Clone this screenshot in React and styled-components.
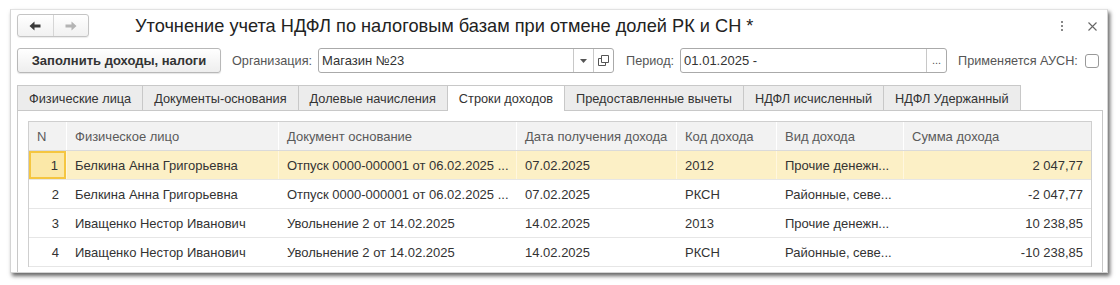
import React from 'react';
import styled, {createGlobalStyle, css} from 'styled-components';

const COLS = '38px 212px 238px 160px 100px 127px 1fr';

const tabs = [
  'Физические лица',
  'Документы-основания',
  'Долевые начисления',
  'Строки доходов',
  'Предоставленные вычеты',
  'НДФЛ исчисленный',
  'НДФЛ Удержанный',
];

const headers = [
  'N',
  'Физическое лицо',
  'Документ основание',
  'Дата получения дохода',
  'Код дохода',
  'Вид дохода',
  'Сумма дохода',
];

const rows = [
  ['1', 'Белкина Анна Григорьевна', 'Отпуск 0000-000001 от 06.02.2025 ...', '07.02.2025', '2012', 'Прочие денежн...', '2 047,77'],
  ['2', 'Белкина Анна Григорьевна', 'Отпуск 0000-000001 от 06.02.2025 ...', '07.02.2025', 'РКСН', 'Районные, севе...', '-2 047,77'],
  ['3', 'Иващенко Нестор Иванович', 'Увольнение 2 от 14.02.2025', '14.02.2025', '2013', 'Прочие денежн...', '10 238,85'],
  ['4', 'Иващенко Нестор Иванович', 'Увольнение 2 от 14.02.2025', '14.02.2025', 'РКСН', 'Районные, севе...', '-10 238,85'],
];

const App = () => {
  return (
    <Page>
      <GlobalStyle />
      <Window>
        <Header>
          <NavGroup>
            <NavButton>
              <svg width="12" height="10" viewBox="0 0 12 10">
                <path d="M0.5 5 L5.5 0.5 L5.5 3.6 L11.5 3.6 L11.5 6.4 L5.5 6.4 L5.5 9.5 Z" fill="#3a3a3a" />
              </svg>
            </NavButton>
            <NavButton $divider>
              <svg width="12" height="10" viewBox="0 0 12 10">
                <path d="M11.5 5 L6.5 0.5 L6.5 3.6 L0.5 3.6 L0.5 6.4 L6.5 6.4 L6.5 9.5 Z" fill="#b4b4b4" />
              </svg>
            </NavButton>
          </NavGroup>
          <Title>Уточнение учета НДФЛ по налоговым базам при отмене долей РК и СН *</Title>
          <WindowTools>
            <MoreIcon>
              <i />
              <i />
              <i />
            </MoreIcon>
            <svg width="9" height="9" viewBox="0 0 9 9">
              <path d="M0.5 0.5 L8.5 8.5 M8.5 0.5 L0.5 8.5" stroke="#666" strokeWidth="1.1" />
            </svg>
          </WindowTools>
        </Header>

        <Toolbar>
          <FillButton>Заполнить доходы, налоги</FillButton>
          <Label $gap={11}>Организация:</Label>
          <Field $width={296}>
            <FieldText>Магазин №23</FieldText>
            <FieldButton>
              <svg width="7" height="4" viewBox="0 0 7 4">
                <path d="M0 0 L7 0 L3.5 4 Z" fill="#555" />
              </svg>
            </FieldButton>
            <FieldButton>
              <svg width="11" height="11" viewBox="0 0 11 11">
                <path d="M3.5 0.5 H10.5 V7.5 H3.5 Z" fill="none" stroke="#555" />
                <path d="M0.5 3.5 H3.5 M0.5 3.5 V10.5 H7.5 V7.5" fill="none" stroke="#555" />
              </svg>
            </FieldButton>
          </Field>
          <Label $gap={12}>Период:</Label>
          <Field $width={267}>
            <FieldText>01.01.2025 -</FieldText>
            <FieldButton>
              <Dots>...</Dots>
            </FieldButton>
          </Field>
          <Label $gap={11}>Применяется АУСН:</Label>
          <Checkbox />
        </Toolbar>

        <TabBar>
          {tabs.map((t, i) => (
            <Tab key={t} $active={i === 3}>
              {t}
            </Tab>
          ))}
        </TabBar>

        <Panel>
          <Table>
            <HeadRow>
              {headers.map((h) => (
                <HeadCell key={h}>{h}</HeadCell>
              ))}
            </HeadRow>
            {rows.map((r, i) => (
              <Row key={r[0]} $selected={i === 0}>
                {r.map((c, j) => (
                  <Cell
                    key={j}
                    $right={j === 0 || j === 6}
                    $current={i === 0 && j === 0}
                    $selected={i === 0}>
                    {c}
                  </Cell>
                ))}
              </Row>
            ))}
          </Table>
        </Panel>
      </Window>
    </Page>
  );
};

const GlobalStyle = createGlobalStyle`
  html, body {
    margin: 0;
    background: #ffffff;
  }
  body {
    font-family: "Liberation Sans", Arial, sans-serif;
    color: #333;
  }
  * {
    box-sizing: border-box;
  }
`;

const Page = styled.div`
  width: 1120px;
  height: 285px;
  padding: 9px 0 0 10px;
  overflow: hidden;
`;

const Window = styled.div`
  width: 1098px;
  height: 264px;
  border: 1px solid #d4d4d4;
  border-top-color: #e2e2e2;
  background: #fff;
  box-shadow: 2px 3px 4px rgba(0, 0, 0, 0.6);
  display: flex;
  flex-direction: column;
  padding: 4px 0 0 6px;
  overflow: hidden;
`;

const Header = styled.div`
  display: flex;
  align-items: center;
  height: 23px;
`;

const NavGroup = styled.div`
  display: flex;
  width: 72px;
  height: 23px;
  border: 1px solid #c4c4c4;
  border-radius: 3px;
  background: linear-gradient(#ffffff, #f1f1f1);
  box-shadow: 0 1px 1px rgba(0, 0, 0, 0.08);
`;

const NavButton = styled.div`
  flex: 1;
  display: flex;
  align-items: center;
  justify-content: center;
  ${(p) =>
    p.$divider &&
    css`
      border-left: 1px solid #d6d6d6;
    `}
`;

const Title = styled.div`
  margin-left: 46px;
  font-size: 18.2px;
  color: #222;
  white-space: nowrap;
  padding-top: 1px;
`;

const WindowTools = styled.div`
  margin-left: auto;
  margin-right: 10px;
  display: flex;
  align-items: center;
  gap: 25px;
  padding-top: 1px;
`;

const MoreIcon = styled.div`
  display: flex;
  flex-direction: column;
  gap: 2px;

  i {
    display: block;
    width: 2px;
    height: 2px;
    background: #888;
  }
`;

const Toolbar = styled.div`
  display: flex;
  align-items: center;
  margin-top: 11px;
  height: 25px;
`;

const FillButton = styled.div`
  width: 204px;
  height: 25px;
  display: flex;
  align-items: center;
  justify-content: center;
  border: 1px solid #b8b8b8;
  border-radius: 3px;
  background: linear-gradient(#ffffff, #eeeeee);
  box-shadow: 0 1px 1px rgba(0, 0, 0, 0.1);
  font-size: 13px;
  font-weight: bold;
  color: #333;
`;

const Label = styled.div`
  margin-left: ${(p) => p.$gap}px;
  margin-right: 6px;
  font-size: 12.7px;
  color: #555;
  white-space: nowrap;
`;

const Field = styled.div`
  width: ${(p) => p.$width}px;
  height: 25px;
  display: flex;
  border: 1px solid #aaaaaa;
  border-radius: 3px;
  background: #fff;
`;

const FieldText = styled.div`
  flex: 1;
  display: flex;
  align-items: center;
  padding-left: 3px;
  font-size: 13px;
  color: #333;
`;

const FieldButton = styled.div`
  width: 20px;
  display: flex;
  align-items: center;
  justify-content: center;
  border-left: 1px solid #c8c8c8;
`;

const Dots = styled.span`
  font-size: 11px;
  color: #555;
  margin-top: -2px;
`;

const Checkbox = styled.div`
  width: 14px;
  height: 14px;
  margin-left: 1px;
  border: 1px solid #999;
  border-radius: 3px;
  background: #fff;
`;

const TabBar = styled.div`
  display: flex;
  margin-top: 12px;
  height: 25px;
`;

const Tab = styled.div`
  height: 25px;
  padding: 0 11px;
  display: flex;
  align-items: center;
  font-size: 12.75px;
  color: #333;
  border: 1px solid #c8c8c8;
  border-bottom: none;
  margin-right: -1px;
  background: ${(p) => (p.$active ? '#ffffff' : '#ececec')};
  position: relative;
  z-index: ${(p) => (p.$active ? 2 : 1)};
  ${(p) =>
    p.$active &&
    css`
      height: 26px;
      margin-bottom: -1px;
    `}
`;

const Panel = styled.div`
  flex: 1;
  margin-right: 4px;
  border: 1px solid #c8c8c8;
  border-bottom: none;
  padding: 10px 10px 0 10px;
`;

const Table = styled.div`
  border: 1px solid #cfcfcf;
  border-bottom: none;
`;

const HeadRow = styled.div`
  display: grid;
  grid-template-columns: ${COLS};
  height: 29px;
  background: #f2f2f2;
  border-bottom: 1px solid #dadada;
`;

const HeadCell = styled.div`
  display: flex;
  align-items: center;
  padding: 0 8px;
  font-size: 13px;
  color: #5a5a5a;
  border-right: 1px solid #ffffff;
  white-space: nowrap;
  overflow: hidden;

  &:last-child {
    border-right: none;
  }
`;

const Row = styled.div`
  display: grid;
  grid-template-columns: ${COLS};
  height: 29px;
  border-bottom: 1px solid #e6e6e6;
  background: ${(p) => (p.$selected ? '#fcf0c6' : '#ffffff')};
`;

const Cell = styled.div`
  display: flex;
  align-items: center;
  justify-content: ${(p) => (p.$right ? 'flex-end' : 'flex-start')};
  padding: 0 8px;
  font-size: 13px;
  color: #333;
  white-space: nowrap;
  overflow: hidden;
  ${(p) =>
    p.$selected &&
    css`
      border-right: 1px solid #fff7df;
    `}
  ${(p) =>
    p.$current &&
    css`
      box-shadow: inset 0 0 0 2px #f5c640;
      background: #fbe8a8;
    `}

  &:last-child {
    border-right: none;
  }
`;

export default App;
